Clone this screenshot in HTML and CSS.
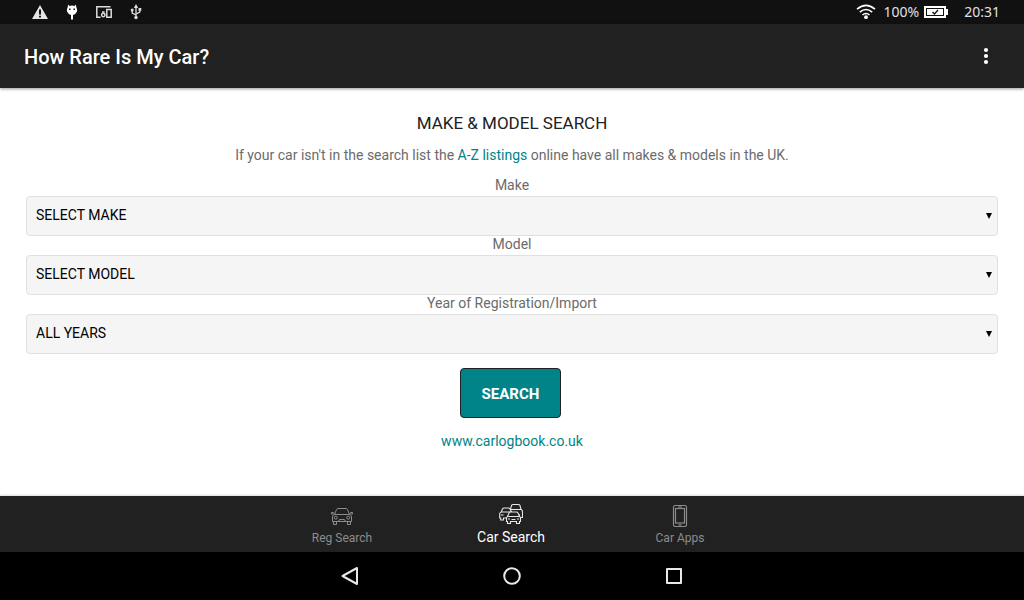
FILE: index.html
```
<!DOCTYPE html>
<html lang="en">
<head>
    <meta charset="UTF-8">
    <meta name="viewport" content="width=device-width, initial-scale=1.0">
    <title>How Rare Is My Car?</title>
    <link rel="stylesheet" href="styles.css">
</head>
<body>
    <div class="status-bar">
        <div class="status-icons">
            <svg width="16" height="16" viewBox="0 0 16 16"><path fill="#e6e6e6" fill-rule="evenodd" d="M8 1L16 15H0zM7 5.500V10.500H9V5.500zM7 11.700V13.500H9V11.700z"/></svg>
            <svg width="16" height="16" viewBox="0 0 16 16"><path fill="#fff" fill-rule="evenodd" d="M4 .5L5.500 2Q8 1 10.500 2L12 .5L12.300 3.300Q13.500 5 13 7.500Q12 10 9 11V15.500H7V11Q4 10 3 7.500Q2.500 5 3.700 3.300zM5 4.500V6H6.500V4.500zM9.500 4.500V6H11V4.500z"/></svg>
            <svg width="16" height="16" viewBox="0 0 16 16" fill="none" stroke="#ddd" stroke-width="1.500"><path d="M14.500 2.700H.800V13.200H4.500M10.800 5.500H15.200V13.200H10.800z"/><circle cx="7.300" cy="11" r="1.700"/><path d="M6 8H8.600"/></svg>
            <svg width="16" height="16" viewBox="0 0 16 16" fill="none" stroke="#ddd" stroke-width="1.300"><path d="M8 3V13M8 11L4.200 9V6M8 10L11.800 8V5"/><path fill="#ddd" stroke="none" d="M8 0L10.200 4H5.800zM10.500 4H13.300V6.800H10.500z"/><circle cx="4.200" cy="6" r="1.500" fill="#ddd" stroke="none"/><circle cx="8" cy="13.500" r="1.700" fill="#ddd" stroke="none"/></svg>
        </div>
        <div class="status-info">
            <svg width="20" height="16" viewBox="0 0 20 16" fill="none" stroke="#fff" stroke-width="1.600"><path d="M1 5.200Q10-2.400 19 5.200M3.800 8.200Q10 2.800 16.200 8.200M6.500 11Q10 8 13.500 11"/><circle cx="10" cy="13.200" r="1.900" fill="#fff" stroke="none"/></svg>
            <span class="percent">100%</span>
            <svg width="24" height="12" viewBox="0 0 24 12"><path fill="#fff" fill-rule="evenodd" d="M0 0H22V3H24V9H22V12H0zM2 2V10H20V2z"/><path fill="#fff" d="M3 3H19V9H3z"/><path d="M8.500 6L10.500 8L14 4" fill="none" stroke="#111" stroke-width="1.300"/></svg>
            <span class="clock">20:31</span>
        </div>
    </div>

    <header class="app-bar">
        <h1>How Rare Is My Car?</h1>
        <button type="button" class="menu-button" aria-label="More options">
            <svg width="24" height="24" viewBox="0 0 24 24" fill="#fff"><circle cx="12" cy="6" r="2.100"/><circle cx="12" cy="12" r="2.100"/><circle cx="12" cy="18" r="2.100"/></svg>
        </button>
    </header>

    <main class="content">
        <h2>MAKE &amp; MODEL SEARCH</h2>
        <p class="intro">If your car isn't in the search list the <a href="#">A-Z listings</a> online have all makes &amp; models in the UK.</p>
        <form class="search-form">
            <label for="make">Make</label>
            <div class="select-box">
                <select id="make" name="make"><option>SELECT MAKE</option></select>
            </div>
            <label for="model">Model</label>
            <div class="select-box">
                <select id="model" name="model"><option>SELECT MODEL</option></select>
            </div>
            <label for="year">Year of Registration/Import</label>
            <div class="select-box">
                <select id="year" name="year"><option>ALL YEARS</option></select>
            </div>
            <button type="button" class="search-button">SEARCH</button>
        </form>
        <a class="site-link" href="#">www.carlogbook.co.uk</a>
    </main>

    <nav class="tabs">
        <a href="#" class="tab">
            <svg width="24" height="24" viewBox="0 0 24 24" fill="none" stroke="#8c8c8c" stroke-width="1"><path d="M4.500 10.500L6.500 5.500Q7 4.500 8 4.500H16Q17 4.500 17.500 5.500L19.500 10.500M4.500 10.500H19.500Q21.500 11 21.500 13V17.500H2.500V13Q2.500 11 4.500 10.500M3.500 17.500V20.500H6.500V17.500M17.500 17.500V20.500H20.500V17.500M4.500 9.500L3 8.500H1.500V10H3.500M19.500 9.500L21 8.500H22.500V10H20.500M8.500 17.500L9.500 15.500H14.500L15.500 17.500"/><circle cx="5.800" cy="13.700" r="1.500"/><circle cx="18.200" cy="13.700" r="1.500"/></svg>
            <span>Reg Search</span>
        </a>
        <a href="#" class="tab active">
            <svg width="24" height="24" viewBox="0 0 24 24" fill="#212121" stroke="#e6e6e6" stroke-width="1.100"><path d="M11 9L12.500 3.500Q13 2.500 14 2.500H19.500Q20.500 2.500 21 3.500L22 7.500Q23.500 8 23.500 10V15.500H20.500V13H11zM12 7.500H22"/><path d="M.7 12Q.7 10.500 2.200 10L3.500 7Q4 6 5 6H9.500Q10.500 6 11 7L12.500 10V16H4.500V18H1.700V16H.7zM2.200 10H12M2 13H4.500"/><path d="M8.500 14.500L10 11Q10.500 10 11.500 10H17.500Q18.500 10 19 11L20.500 14.500Q21.500 15 21.500 16.500V19.500H20.500V21.500H17.500V19.500H11.500V21.500H8.500V19.500H7.500V16.500Q7.500 15 8.500 14.500zM8.500 14.500H20.500M9 17H11M18 17H20M12.500 17.500H16.500"/></svg>
            <span>Car Search</span>
        </a>
        <a href="#" class="tab">
            <svg width="24" height="24" viewBox="0 0 24 24" fill="none" stroke="#8c8c8c" stroke-width="1.200"><rect x="5.500" y="1.500" width="13" height="21" rx="1.500"/><rect x="7.500" y="4.500" width="9" height="14.500"/><path d="M10 3H14M10.500 20.800H13.500"/></svg>
            <span>Car Apps</span>
        </a>
    </nav>

    <div class="nav-bar">
        <button type="button" aria-label="Back"><svg width="24" height="24" viewBox="0 0 24 24"><path d="M19 4V20L4.500 12z"/></svg></button>
        <button type="button" aria-label="Home"><svg width="24" height="24" viewBox="0 0 24 24"><circle cx="12" cy="12" r="7.800"/></svg></button>
        <button type="button" aria-label="Recent apps"><svg width="24" height="24" viewBox="0 0 24 24"><rect x="5" y="5" width="14" height="14"/></svg></button>
    </div>
</body>
</html>
```
FILE: styles.css
```
* {
    box-sizing: border-box;
}
body {
    display: flex;
    flex-direction: column;
    min-height: 100vh;
    margin: 0;
    background-color: #fff;
    color: #6b6b6b;
    font-family: Roboto, sans-serif;
    font-size: 14px;
}
svg {
    display: block;
}
a {
    color: #008489;
    text-decoration: none;
}
.status-bar {
    display: flex;
    justify-content: space-between;
    align-items: center;
    height: 24px;
    padding: 0 24px 0 32px;
    background-color: #111;
    color: #e0e0e0;
    font-family: "Noto Sans", sans-serif;
}
.status-icons {
    display: flex;
    gap: 16px;
}
.status-info {
    display: flex;
    align-items: center;
}
.percent,
.clock {
    padding-bottom: 2px;
}
.percent {
    margin: 0 5px 0 8px;
}
.clock {
    margin-left: 16px;
}
.app-bar {
    display: flex;
    justify-content: space-between;
    align-items: center;
    height: 64px;
    padding: 0 26px 0 24px;
    background-color: #212121;
    box-shadow: 0 1px 3px rgba(0, 0, 0, 0.4);
}
.app-bar h1 {
    margin: 0;
    padding-top: 2px;
    color: #fff;
    font-size: 20px;
    font-weight: 500;
}
.menu-button {
    padding: 0;
    border: none;
    background: none;
    cursor: pointer;
}
.content {
    flex: 1;
    padding: 25px 26px;
    text-align: center;
}
.content h2 {
    margin: 0;
    color: #212121;
    font-size: 17px;
    font-weight: 400;
    line-height: 20px;
}
.intro {
    margin: 12px 0;
    line-height: 20px;
}
.search-form label {
    display: block;
    padding-bottom: 2px;
    line-height: 17px;
}
.select-box {
    position: relative;
}
.select-box::after {
    content: "";
    position: absolute;
    top: 17px;
    right: 6px;
    border: 3px solid transparent;
    border-top: 6px solid #000;
    border-bottom: none;
    pointer-events: none;
}
.select-box select {
    appearance: none;
    display: block;
    width: 100%;
    height: 40px;
    padding: 0 20px 2px 9px;
    border: 1px solid #e0e0e0;
    border-radius: 4px;
    background-color: #f5f5f5;
    color: #000;
    font-family: inherit;
    font-size: 14px;
}
.search-button {
    margin: 14px 3px 13px 0;
    padding: 16px 21px 14px;
    border: 1px solid #212121;
    border-radius: 4px;
    background-color: #008489;
    color: #fff;
    font-family: inherit;
    font-size: 15px;
    font-weight: 700;
    line-height: 18px;
    cursor: pointer;
}
.site-link {
    line-height: 20px;
}
.tabs {
    display: flex;
    justify-content: center;
    height: 56px;
    padding-right: 2px;
    background-color: #212121;
    box-shadow: 0 -1px 2px rgba(0, 0, 0, 0.15);
}
.tab {
    display: flex;
    flex-direction: column;
    align-items: center;
    width: 169px;
    padding-top: 8px;
    color: #8c8c8c;
    font-size: 12px;
    line-height: 20px;
}
.tab.active {
    padding-top: 6px;
    color: #fff;
    font-size: 14px;
    line-height: 22px;
}
.nav-bar {
    display: flex;
    justify-content: center;
    height: 48px;
    background-color: #000;
}
.nav-bar button {
    display: flex;
    justify-content: center;
    align-items: center;
    width: 162px;
    padding: 0;
    border: none;
    background: none;
}
.nav-bar svg {
    fill: none;
    stroke: #e8e8e8;
    stroke-width: 2;
    stroke-linejoin: round;
}
```
